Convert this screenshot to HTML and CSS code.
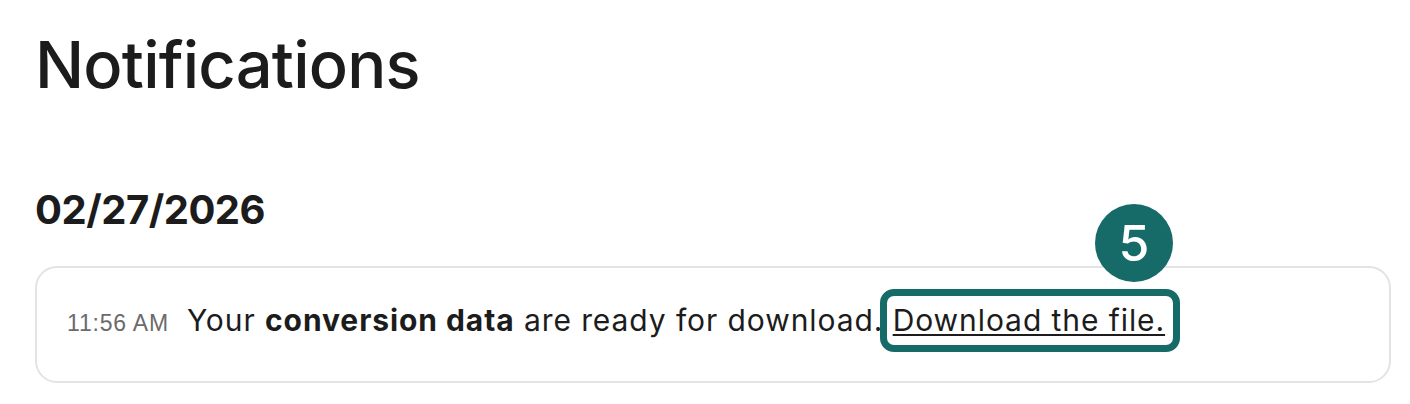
FILE: index.html
```html
<!DOCTYPE html>
<html lang="en">
<head>
  <meta charset="UTF-8" />
  <meta name="viewport" content="width=device-width, initial-scale=1" />
  <title>Notifications</title>
  <link rel="stylesheet" href="styles.css">
</head>
<body>

  <main class="page">
    <h1 class="page-title">Notifications</h1>

    <section class="day">
      <h2 class="day-date">02/27/2026</h2>

      <div class="note">
        <span class="note-time">11:56 AM</span>
        <p class="note-text">
          Your <strong>conversion data</strong> are ready for download.
          <a class="note-link" href="#">Download the file.<span class="step">5</span></a>
        </p>
      </div>
    </section>
  </main>

</body>
</html>
```

FILE: styles.css
```css
body {
  margin: 0;
  font-family: 'Inter', 'Liberation Sans', sans-serif;
  background-color: #fff;
  color: #1c1c1c;
}

.page {
  padding: 24px 19px 0 35px;
}

.page-title {
  margin: 0;
  font-size: 65px;
  font-weight: 500;
  letter-spacing: -0.8px;
  line-height: 82px;
}

.day {
  margin-top: 80px;
}

.day-date {
  margin: 0 0 32px;
  font-size: 40px;
  font-weight: 700;
  letter-spacing: -0.5px;
  line-height: 48px;
}

.note {
  display: flex;
  align-items: baseline;
  gap: 18px;
  border: 2px solid #e3e3e3;
  border-radius: 22px;
  padding: 32px 30px 41px;
}

.note-time {
  font-family: 'Liberation Sans', Arial, sans-serif;
  font-size: 23px;
  letter-spacing: 0.8px;
  color: #6b6b6b;
}

.note-text {
  margin: 0;
  font-size: 30px;
  letter-spacing: 0.92px;
  line-height: 40px;
}

.note-text strong {
  font-weight: 700;
}

.note-link {
  position: relative;
  color: #1c1c1c;
  text-decoration: underline;
  text-underline-offset: 3px;
  text-decoration-thickness: 2px;
}

.note-link::after {
  content: "";
  position: absolute;
  top: -13px;
  bottom: -14px;
  left: -13px;
  right: -15px;
  border: 7px solid #166b69;
  border-radius: 14px;
}

.step {
  position: absolute;
  right: -8px;
  bottom: calc(100% + 20px);
  width: 78px;
  height: 78px;
  border-radius: 50%;
  background: #166b69;
  color: #fff;
  font-size: 50px;
  font-weight: 500;
  letter-spacing: 0;
  line-height: 78px;
  text-align: center;
  text-decoration: none;
}
```
